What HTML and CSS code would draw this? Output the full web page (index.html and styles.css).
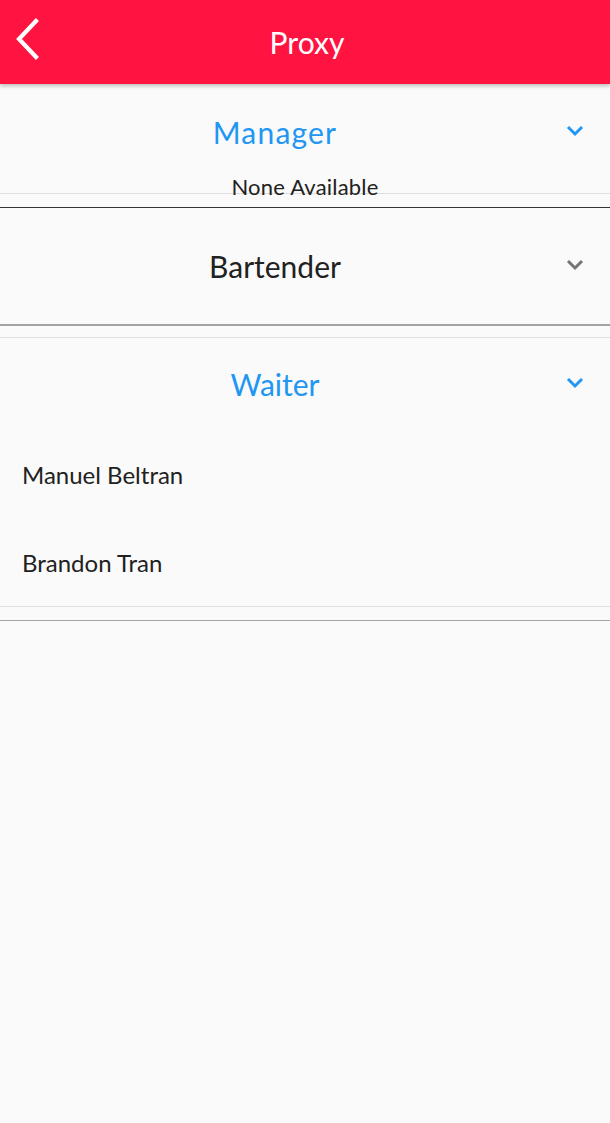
FILE: index.html
```html
<!DOCTYPE html>
<html>
<head>
<meta charset="utf-8">
<link rel="stylesheet" href="styles.css">
</head>
<body>
<div class="app">
  <header class="topbar">
    <button class="back" aria-label="Back">
      <svg width="30" height="44" viewBox="0 0 30 44"><path d="M22 4 L5 22 L22 40" fill="none" stroke="#fff" stroke-width="4.2" stroke-linecap="square"/></svg>
    </button>
    <h1 class="title">Proxy</h1>
  </header>

  <section class="group group-manager">
    <div class="group-head">
      <span class="group-title active wide">Manager</span>
      <svg class="chev" width="20" height="14" viewBox="0 0 20 14"><path d="M3 3 L10 10 L17 3" fill="none" stroke="#2196f3" stroke-width="3"/></svg>
    </div>
    <div class="empty">None Available</div>
  </section>
  <div class="sep sep-dark"></div>

  <section class="group group-bartender">
    <div class="group-head">
      <span class="group-title">Bartender</span>
      <svg class="chev" width="20" height="14" viewBox="0 0 20 14"><path d="M3 3 L10 10 L17 3" fill="none" stroke="#757575" stroke-width="3"/></svg>
    </div>
  </section>
  <div class="sep sep-light"></div>

  <section class="group group-waiter">
    <div class="group-head">
      <span class="group-title active">Waiter</span>
      <svg class="chev" width="20" height="14" viewBox="0 0 20 14"><path d="M3 3 L10 10 L17 3" fill="none" stroke="#2196f3" stroke-width="3"/></svg>
    </div>
    <ul class="people">
      <li class="person">Manuel Beltran</li>
      <li class="person">Brandon Tran</li>
    </ul>
  </section>
  <div class="sep sep-gray"></div>
</div>
</body>
</html>
```

FILE: styles.css
```css
* { box-sizing: border-box; }
html, body { margin: 0; padding: 0; }
body {
  background: #fafafa;
  font-family: "Lato", "Noto Sans", sans-serif;
  color: #212121;
  width: 610px;
  height: 1123px;
  overflow: hidden;
}
.app { display: flex; flex-direction: column; }

.topbar {
  height: 84px;
  background: #ff1441;
  display: flex;
  align-items: center;
  justify-content: center;
  position: relative;
  box-shadow: 0 2px 4px rgba(0,0,0,0.25);
  z-index: 2;
}
.back {
  position: absolute;
  left: 14px;
  top: 17px;
  background: none;
  border: 0;
  padding: 0;
  width: 30px;
  height: 44px;
}
.back svg { display: block; }
.title {
  margin: 0 0 0 4px;
  color: #fff;
  font-weight: 400;
  font-size: 30px;
  line-height: 84px;
}

.group { display: flex; flex-direction: column; }
.group-head {
  position: relative;
  display: flex;
  align-items: center;
  justify-content: center;
  padding-right: 60px;
}
.group-manager .group-head { height: 96px; }
.group-bartender .group-head { height: 116px; }
.group-waiter .group-head { height: 92px; }

.group-title {
  font-size: 30px;
  color: #212121;
}
.group-title.wide { letter-spacing: 1.2px; }
.group-title.active { color: #2196f3; }
.chev {
  position: absolute;
  right: 25px;
  top: 50%;
  margin-top: -8px;
}

.group-manager { border-bottom: 1px solid #dedede; }
.empty {
  height: 13px;
  line-height: 13px;
  font-size: 22px;
  text-align: center;
  letter-spacing: 0.2px;
  overflow: visible;
}

.sep { height: 14px; }
.sep-dark { border-bottom: 1px solid #333; }
.sep-light { height: 14px; border-top: 2px solid #a4a4a4; border-bottom: 1px solid #e0e0e0; }
.sep-gray { height: 15px; border-top: 1px solid #e0e0e0; border-bottom: 1px solid #a4a4a4; }

.people { list-style: none; margin: 0; padding: 0; }
.person {
  height: 88px;
  display: flex;
  align-items: center;
  padding-left: 22px;
  font-size: 24px;
}
```
